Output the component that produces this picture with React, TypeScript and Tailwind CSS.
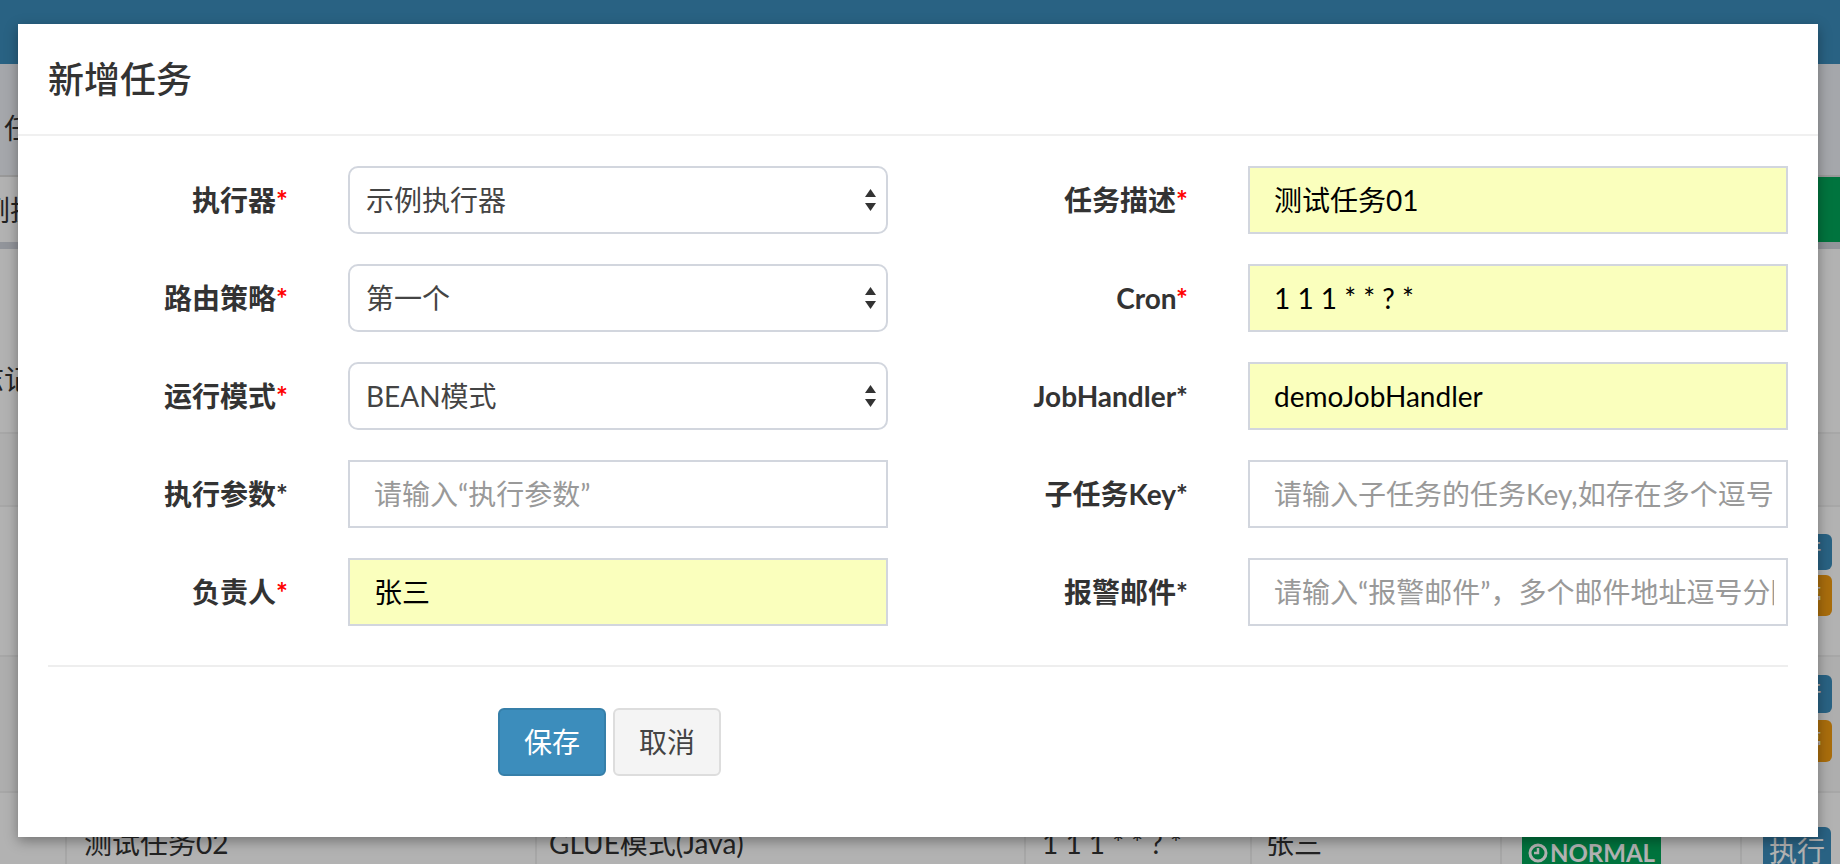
import React from "react";

const FONT = "font-['Lato','Noto_Sans_CJK_SC',sans-serif]";

function Arrows() {
  return (
    <svg width="13" height="26" viewBox="0 0 13 26" aria-hidden="true">
      <path d="M6.5 2 L12 10 L1 10 Z" fill="#333" />
      <path d="M6.5 24 L12 16 L1 16 Z" fill="#333" />
    </svg>
  );
}

function SelectBox({ value }: { value: string }) {
  return (
    <div className="flex h-[68px] w-full items-center justify-between rounded-[10px] border-2 border-[#d2d6de] bg-white pl-[16px] pr-[9px] text-[28px] text-[#444]">
      <span className="whitespace-nowrap">{value}</span>
      <Arrows />
    </div>
  );
}

function InputBox({ value, placeholder }: { value?: string; placeholder?: string }) {
  const filled = value !== undefined;
  return (
    <div
      className={
        filled
          ? "flex h-[68px] w-full items-center border-2 border-[#d2d6de] bg-[#faffbd] pl-[24px] pr-[12px] text-[28px] text-black"
          : "flex h-[68px] w-full items-center border-2 border-[#d2d6de] bg-white pl-[24px] pr-[12px] text-[28px] text-[#999]"
      }
    >
      <div className="w-full overflow-hidden whitespace-nowrap">{filled ? value : placeholder}</div>
    </div>
  );
}

function Label({ text, red }: { text: string; red?: boolean }) {
  return (
    <div className="w-[300px] shrink-0 px-[30px] text-right text-[28px] font-bold text-[#333]">
      {text}
      <span className={red ? "text-[#f00]" : "text-[#333]"}>*</span>
    </div>
  );
}

function FormRow({
  l1,
  r1,
  c1,
  l2,
  r2,
  c2,
}: {
  l1: string;
  r1?: boolean;
  c1: React.ReactNode;
  l2: string;
  r2?: boolean;
  c2: React.ReactNode;
}) {
  return (
    <div className="mb-[30px] flex h-[68px] items-center">
      <Label text={l1} red={r1} />
      <div className="w-[600px] shrink-0 px-[30px]">{c1}</div>
      <Label text={l2} red={r2} />
      <div className="w-[600px] shrink-0 px-[30px]">{c2}</div>
    </div>
  );
}

function ClockIcon() {
  return (
    <svg width="20" height="20" viewBox="0 0 20 20" aria-hidden="true">
      <circle cx="10" cy="10" r="8" fill="none" stroke="#fff" strokeWidth="3" />
      <path d="M10 5 V10 H6" fill="none" stroke="#fff" strokeWidth="2.5" />
    </svg>
  );
}

function Background() {
  return (
    <div className="absolute inset-0 flex flex-col bg-white text-[#333]">
      <div className="h-[64px] shrink-0 bg-[#3c8dbc]" />
      <div className="h-[113px] shrink-0 border-b-2 border-[#dcdcdc] bg-[#ecf0f5] pl-[4px] pt-[44px] text-[28px] leading-[40px] whitespace-nowrap">
        任务管理
      </div>
      <div className="flex h-[65px] shrink-0 items-center justify-between">
        <div className="ml-[-46px] text-[28px] leading-[40px] whitespace-nowrap">示例执行器</div>
        <div className="h-full w-[140px] bg-[#00a65a]" />
      </div>
      <div className="h-[7px] shrink-0 bg-[#d2d6de]" />
      <div className="h-[185px] shrink-0 border-b-2 border-[#f0f0f0] pt-[110px]">
        <div className="ml-[-52px] text-[28px] leading-[40px] whitespace-nowrap">日志记录</div>
      </div>
      <div className="h-[73px] shrink-0 border-b-2 border-[#f0f0f0] bg-[#f9f9f9]" />
      <div className="flex h-[150px] shrink-0 justify-end border-b-2 border-[#f0f0f0]">
        <div className="flex w-[100px] flex-col gap-[5px] pl-[23px] pt-[27px]">
          <div className="flex h-[36px] w-[69px] items-center justify-center rounded-[6px] bg-[#3c8dbc] text-[24px] text-white">执行</div>
          <div className="flex h-[41px] w-[69px] items-center justify-center rounded-[6px] bg-[#f39c12] text-[24px] text-white">暂停</div>
        </div>
      </div>
      <div className="flex h-[136px] shrink-0 justify-end border-b-2 border-[#f0f0f0] bg-[#f9f9f9]">
        <div className="flex w-[100px] flex-col gap-[7px] pl-[23px] pt-[18px]">
          <div className="flex h-[38px] w-[69px] items-center justify-center rounded-[6px] bg-[#3c8dbc] text-[24px] text-white">执行</div>
          <div className="flex h-[42px] w-[69px] items-center justify-center rounded-[6px] bg-[#f39c12] text-[24px] text-white">暂停</div>
        </div>
      </div>
      <div className="flex h-[100px] shrink-0 text-[28px] leading-[40px]">
        <div className="w-[65px] shrink-0" />
        <div className="w-[470px] shrink-0 border-l-2 border-[#f0f0f0] pl-[17px] pt-[30px] whitespace-nowrap">测试任务02</div>
        <div className="w-[489px] shrink-0 border-l-2 border-[#f0f0f0] pl-[12px] pt-[30px] whitespace-nowrap">GLUE模式(Java)</div>
        <div className="w-[226px] shrink-0 border-l-2 border-[#f0f0f0] pl-[16px] pt-[30px] whitespace-nowrap">1 1 1 * * ? *</div>
        <div className="w-[250px] shrink-0 border-l-2 border-[#f0f0f0] pl-[14px] pt-[30px] whitespace-nowrap">张三</div>
        <div className="w-[240px] shrink-0 border-l-2 border-[#f0f0f0] pl-[20px] pt-[38px]">
          <div className="flex h-[44px] w-[139px] items-center justify-center gap-[2px] rounded-[6px] bg-[#00a65a] text-[24px] font-bold text-white">
            <ClockIcon />
            <span>NORMAL</span>
          </div>
        </div>
        <div className="flex-1 border-l-2 border-[#f0f0f0] pl-[21px] pt-[34px]">
          <div className="flex h-[48px] w-[68px] items-center justify-center rounded-[6px] bg-[#3c8dbc] text-[28px] text-white">执行</div>
        </div>
      </div>
    </div>
  );
}

export default function App() {
  return (
    <div className={`relative h-[864px] w-[1840px] overflow-hidden bg-white ${FONT}`}>
      <Background />
      <div className="absolute inset-0 bg-black/30" />
      <div className="absolute left-[18px] top-[24px] w-[1800px] bg-white shadow-[0_4px_12px_rgba(0,0,0,0.35)]">
        <div className="flex h-[112px] items-center border-b-2 border-[#f0f0f0] px-[30px]">
          <div className="text-[36px] font-medium leading-[51px] text-[#333]">新增任务</div>
        </div>
        <div className="flex flex-col pt-[30px]">
          <FormRow
            l1="执行器"
            r1
            c1={<SelectBox value="示例执行器" />}
            l2="任务描述"
            r2
            c2={<InputBox value="测试任务01" />}
          />
          <FormRow
            l1="路由策略"
            r1
            c1={<SelectBox value="第一个" />}
            l2="Cron"
            r2
            c2={<InputBox value="1 1 1 * * ? *" />}
          />
          <FormRow
            l1="运行模式"
            r1
            c1={<SelectBox value="BEAN模式" />}
            l2="JobHandler"
            c2={<InputBox value="demoJobHandler" />}
          />
          <FormRow
            l1="执行参数"
            c1={<InputBox placeholder="请输入“执行参数”" />}
            l2="子任务Key"
            c2={<InputBox placeholder="请输入子任务的任务Key,如存在多个逗号分隔" />}
          />
          <FormRow
            l1="负责人"
            r1
            c1={<InputBox value="张三" />}
            l2="报警邮件"
            c2={<InputBox placeholder="请输入“报警邮件”，多个邮件地址逗号分隔" />}
          />
          <div className="mx-[30px] mt-[9px] h-[2px] shrink-0 bg-[#eeeeee]" />
          <div className="flex gap-[7px] pb-[61px] pl-[480px] pt-[41px]">
            <div className="flex h-[68px] items-center rounded-[6px] border-2 border-[#367fa9] bg-[#3c8dbc] px-[24px] text-[28px] text-white">
              保存
            </div>
            <div className="flex h-[68px] items-center rounded-[6px] border-2 border-[#dddddd] bg-[#f4f4f4] px-[24px] text-[28px] text-[#444]">
              取消
            </div>
          </div>
        </div>
      </div>
    </div>
  );
}
